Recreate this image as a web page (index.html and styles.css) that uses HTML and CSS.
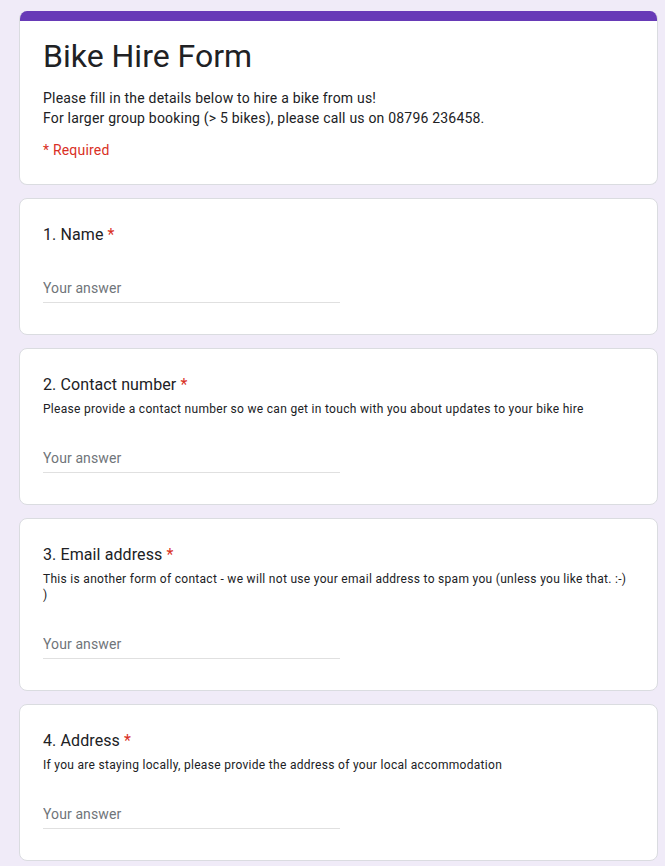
FILE: index.html
```html
<!DOCTYPE html>
<html lang="en">
<head>
<meta charset="utf-8">
<title>Bike Hire Form</title>
<link rel="stylesheet" href="styles.css">
</head>
<body>
<main class="form">
  <section class="card header-card">
    <div class="header-bar"></div>
    <div class="header-body">
      <h1 class="form-title">Bike Hire Form</h1>
      <p class="form-desc">Please fill in the details below to hire a bike from us!<br>For larger group booking (&gt; 5 bikes), please call us on 08796 236458.</p>
      <p class="required-note">* Required</p>
    </div>
  </section>

  <section class="card question">
    <div class="q-title">1. Name <span class="star">*</span></div>
    <div class="answer"><input class="answer-input" type="text" placeholder="Your answer"></div>
  </section>

  <section class="card question">
    <div class="q-title">2. Contact number <span class="star">*</span></div>
    <div class="q-desc">Please provide a contact number so we can get in touch with you about updates to your bike hire</div>
    <div class="answer"><input class="answer-input" type="text" placeholder="Your answer"></div>
  </section>

  <section class="card question">
    <div class="q-title">3. Email address <span class="star">*</span></div>
    <div class="q-desc">This is another form of contact - we will not use your email address to spam you (unless you like that. :-)<br>)</div>
    <div class="answer"><input class="answer-input" type="text" placeholder="Your answer"></div>
  </section>

  <section class="card question">
    <div class="q-title">4. Address <span class="star">*</span></div>
    <div class="q-desc">If you are staying locally, please provide the address of your local accommodation</div>
    <div class="answer"><input class="answer-input" type="text" placeholder="Your answer"></div>
  </section>
</main>
</body>
</html>
```
FILE: styles.css
```css
html, body {
  margin: 0;
  padding: 0;
  background: #f0ebf8;
}
body {
  font-family: Roboto, "Liberation Sans", Arial, sans-serif;
  color: #202124;
}
.form {
  display: flex;
  flex-direction: column;
  gap: 13px;
  width: 639px;
  padding: 11px 0 20px 19px;
}
.card {
  background: #fff;
  border: 1px solid #dadce0;
  border-radius: 8px;
  box-sizing: border-box;
}
.header-card {
  border-top: none;
  overflow: hidden;
}
.header-bar {
  height: 10px;
  background: #673ab7;
}
.header-body {
  padding: 15px 24px 24px 23px;
}
.form-title {
  margin: 0;
  font-size: 32px;
  line-height: 40px;
  font-weight: 400;
  color: #202124;
}
.form-desc {
  margin: 12px 0 0;
  font-size: 14px;
  line-height: 20px;
  letter-spacing: 0.2px;
}
.required-note {
  margin: 12px 0 0;
  font-size: 14px;
  line-height: 20px;
  letter-spacing: 0.2px;
  color: #d93025;
}
.question {
  padding: 24px 24px 31px 23px;
}
.q-title {
  font-size: 16px;
  line-height: 24px;
  letter-spacing: 0.1px;
  color: #202124;
}
.star {
  color: #d93025;
}
.q-desc {
  margin-top: 4px;
  font-size: 12px;
  line-height: 16px;
  letter-spacing: 0.3px;
  color: #202124;
}
.answer {
  margin-top: 29px;
  width: 297px;
  border-bottom: 1px solid #e0e0e0;
  padding-bottom: 2px;
}
.answer-input {
  display: block;
  width: 100%;
  box-sizing: border-box;
  border: none;
  outline: none;
  padding: 0;
  margin: 0;
  height: 24px;
  font-family: Roboto, "Liberation Sans", Arial, sans-serif;
  font-size: 14px;
  letter-spacing: 0.1px;
  color: #202124;
  background: transparent;
}
.answer-input::placeholder {
  color: #70757a;
}
```
